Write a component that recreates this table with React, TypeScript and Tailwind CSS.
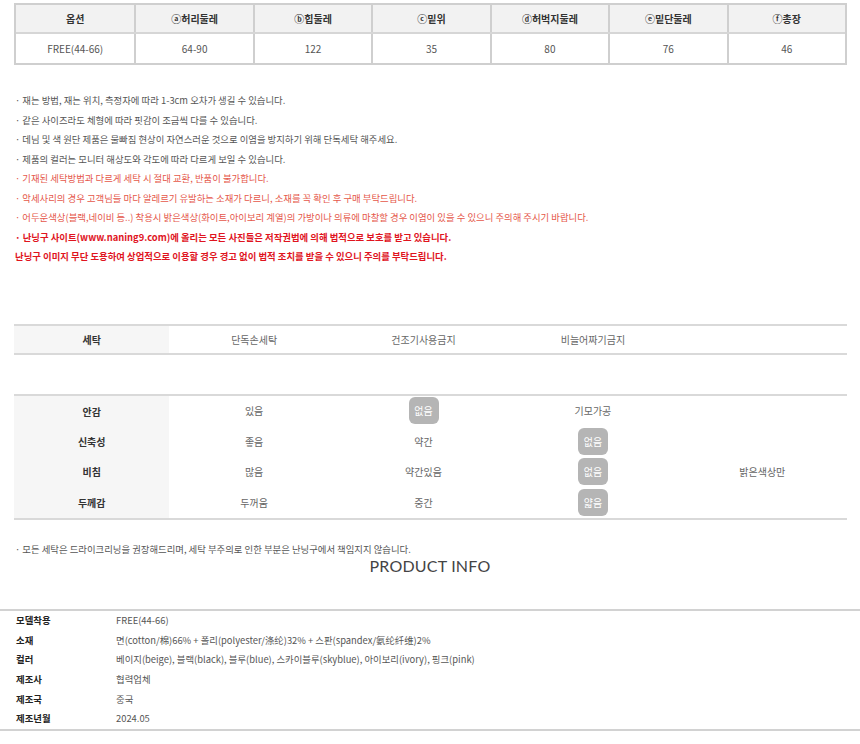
const font = "font-['Noto_Sans_CJK_KR','Noto_Sans',sans-serif]";

const sizeHead = ["옵션", "ⓐ허리둘레", "ⓑ힙둘레", "ⓒ밑위", "ⓓ허벅지둘레", "ⓔ밑단둘레", "ⓕ총장"];
const sizeRow = ["FREE(44-66)", "64-90", "122", "35", "80", "76", "46"];

const notes: { text: string; tone: "gray" | "red" | "bold" }[] = [
  { text: "· 재는 방법, 재는 위치, 측정자에 따라 1-3cm 오차가 생길 수 있습니다.", tone: "gray" },
  { text: "· 같은 사이즈라도 체형에 따라 핏감이 조금씩 다를 수 있습니다.", tone: "gray" },
  { text: "· 데님 및 색 원단 제품은 물빠짐 현상이 자연스러운 것으로 이염을 방지하기 위해 단독세탁 해주세요.", tone: "gray" },
  { text: "· 제품의 컬러는 모니터 해상도와 각도에 따라 다르게 보일 수 있습니다.", tone: "gray" },
  { text: "· 기재된 세탁방법과 다르게 세탁 시 절대 교환, 반품이 불가합니다.", tone: "red" },
  { text: "· 악세사리의 경우 고객님들 마다 알레르기 유발하는 소재가 다르니, 소재를 꼭 확인 후 구매 부탁드립니다.", tone: "red" },
  { text: "· 어두운색상(블랙,네이비 등..) 착용시 밝은색상(화이트,아이보리 계열)의 가방이나 의류에 마찰할 경우 이염이 있을 수 있으니 주의해 주시기 바랍니다.", tone: "red" },
  { text: "· 난닝구 사이트(www.naning9.com)에 올리는 모든 사진들은 저작권법에 의해 법적으로 보호를 받고 있습니다.", tone: "bold" },
  { text: "난닝구 이미지 무단 도용하여 상업적으로 이용할 경우 경고 없이 법적 조치를 받을 수 있으니 주의를 부탁드립니다.", tone: "bold" },
];

const toneClass = {
  gray: "text-[#555]",
  red: "text-[#e5574a]",
  bold: "text-[#e0141e] font-bold",
};

const fabric: { label: string; cells: string[]; pick: number }[] = [
  { label: "안감", cells: ["있음", "없음", "기모가공", ""], pick: 1 },
  { label: "신축성", cells: ["좋음", "약간", "없음", ""], pick: 2 },
  { label: "비침", cells: ["많음", "약간있음", "없음", "밝은색상만"], pick: 2 },
  { label: "두께감", cells: ["두꺼움", "중간", "얇음", ""], pick: 2 },
];

const info = [
  ["모델착용", "FREE(44-66)"],
  ["소재", "면(cotton/棉)66% + 폴리(polyester/涤纶)32% + 스판(spandex/氨纶纤维)2%"],
  ["컬러", "베이지(beige), 블랙(black), 블루(blue), 스카이블루(skyblue), 아이보리(ivory), 핑크(pink)"],
  ["제조사", "협력업체"],
  ["제조국", "중국"],
  ["제조년월", "2024.05"],
];

function SizeTable() {
  return (
    <div className="mx-[14px] mt-[3px] w-[833px] border-2 border-[#cfcfcf]">
      <div className="grid grid-cols-7 bg-[#f2f2f2] border-b-2 border-[#d6d6d6]">
        {sizeHead.map((h, i) => (
          <div
            key={h}
            className={`h-[27px] flex items-center justify-center text-[10px] font-bold text-[#333] ${i > 0 ? "border-l-2 border-[#cfcfcf]" : ""}`}
          >
            {h}
          </div>
        ))}
      </div>
      <div className="grid grid-cols-7">
        {sizeRow.map((v, i) => (
          <div
            key={i}
            className={`h-[29px] flex items-center justify-center text-[10px] text-[#555] ${i > 0 ? "border-l-2 border-[#cfcfcf]" : ""}`}
          >
            {v}
          </div>
        ))}
      </div>
    </div>
  );
}

function Notes() {
  return (
    <ul className="mt-[26px] ml-[15px] flex flex-col">
      {notes.map((n, i) => (
        <li key={i} className={`h-[19.5px] leading-[19.5px] text-[9.4px] whitespace-nowrap ${toneClass[n.tone]}`}>
          {n.text}
        </li>
      ))}
    </ul>
  );
}

function WashTable() {
  return (
    <div className="mx-[14px] mt-[57px] w-[833px] border-t-2 border-b-2 border-[#d9d9d9] flex h-[31px] text-[10px]">
      <div className="w-[156px] bg-[#f6f6f6] flex items-center justify-center font-bold text-[#333]">세탁</div>
      {["단독손세탁", "건조기사용금지", "비늘어짜기금지", ""].map((t, i) => (
        <div key={i} className="w-[170px] flex items-center justify-center text-[#666]">
          {t}
        </div>
      ))}
    </div>
  );
}

function FabricTable() {
  return (
    <div className="mx-[14px] mt-[39px] w-[833px] border-t-2 border-b-2 border-[#d9d9d9] flex flex-col text-[10px]">
      {fabric.map((r, ri) => (
        <div key={r.label} className="flex h-[30.5px]">
          <div className={`w-[156px] bg-[#f6f6f6] flex items-center justify-center font-bold text-[#333] ${ri === 0 ? "pt-[2px]" : ""}`}>
            {r.label}
          </div>
          {r.cells.map((c, i) => (
            <div key={i} className="w-[170px] flex items-center justify-center text-[#666]">
              {c &&
                (i === r.pick ? (
                  <span className="w-[30px] h-[27px] rounded-[6px] bg-[#b5b5b5] text-white flex items-center justify-center">
                    {c}
                  </span>
                ) : (
                  c
                ))}
            </div>
          ))}
        </div>
      ))}
    </div>
  );
}

function ProductInfo() {
  return (
    <div className="mt-[22px]">
      <p className="ml-[15px] text-[9.4px] text-[#555] leading-[14px]">
        · 모든 세탁은 드라이크리닝을 권장해드리며, 세탁 부주의로 인한 부분은 난닝구에서 책임지지 않습니다.
      </p>
      <h2 className="text-center text-[16px] leading-[20px] text-[#444] font-['Lato','Noto_Sans',sans-serif] tracking-[0.2px]">
        PRODUCT INFO
      </h2>
      <div className="mt-[33px] border-t-2 border-b-2 border-[#d2d2d2] pb-[1px]">
        {info.map(([k, v]) => (
          <div key={k} className="flex h-[19.6px] items-center text-[9.4px]">
            <div className="w-[116px] pl-[16px] font-bold text-[#222]">{k}</div>
            <div className="text-[#555] whitespace-nowrap">{v}</div>
          </div>
        ))}
      </div>
    </div>
  );
}

export default function App() {
  return (
    <div className={`w-[860px] h-[744px] bg-white overflow-hidden ${font}`}>
      <SizeTable />
      <Notes />
      <WashTable />
      <FabricTable />
      <ProductInfo />
    </div>
  );
}
